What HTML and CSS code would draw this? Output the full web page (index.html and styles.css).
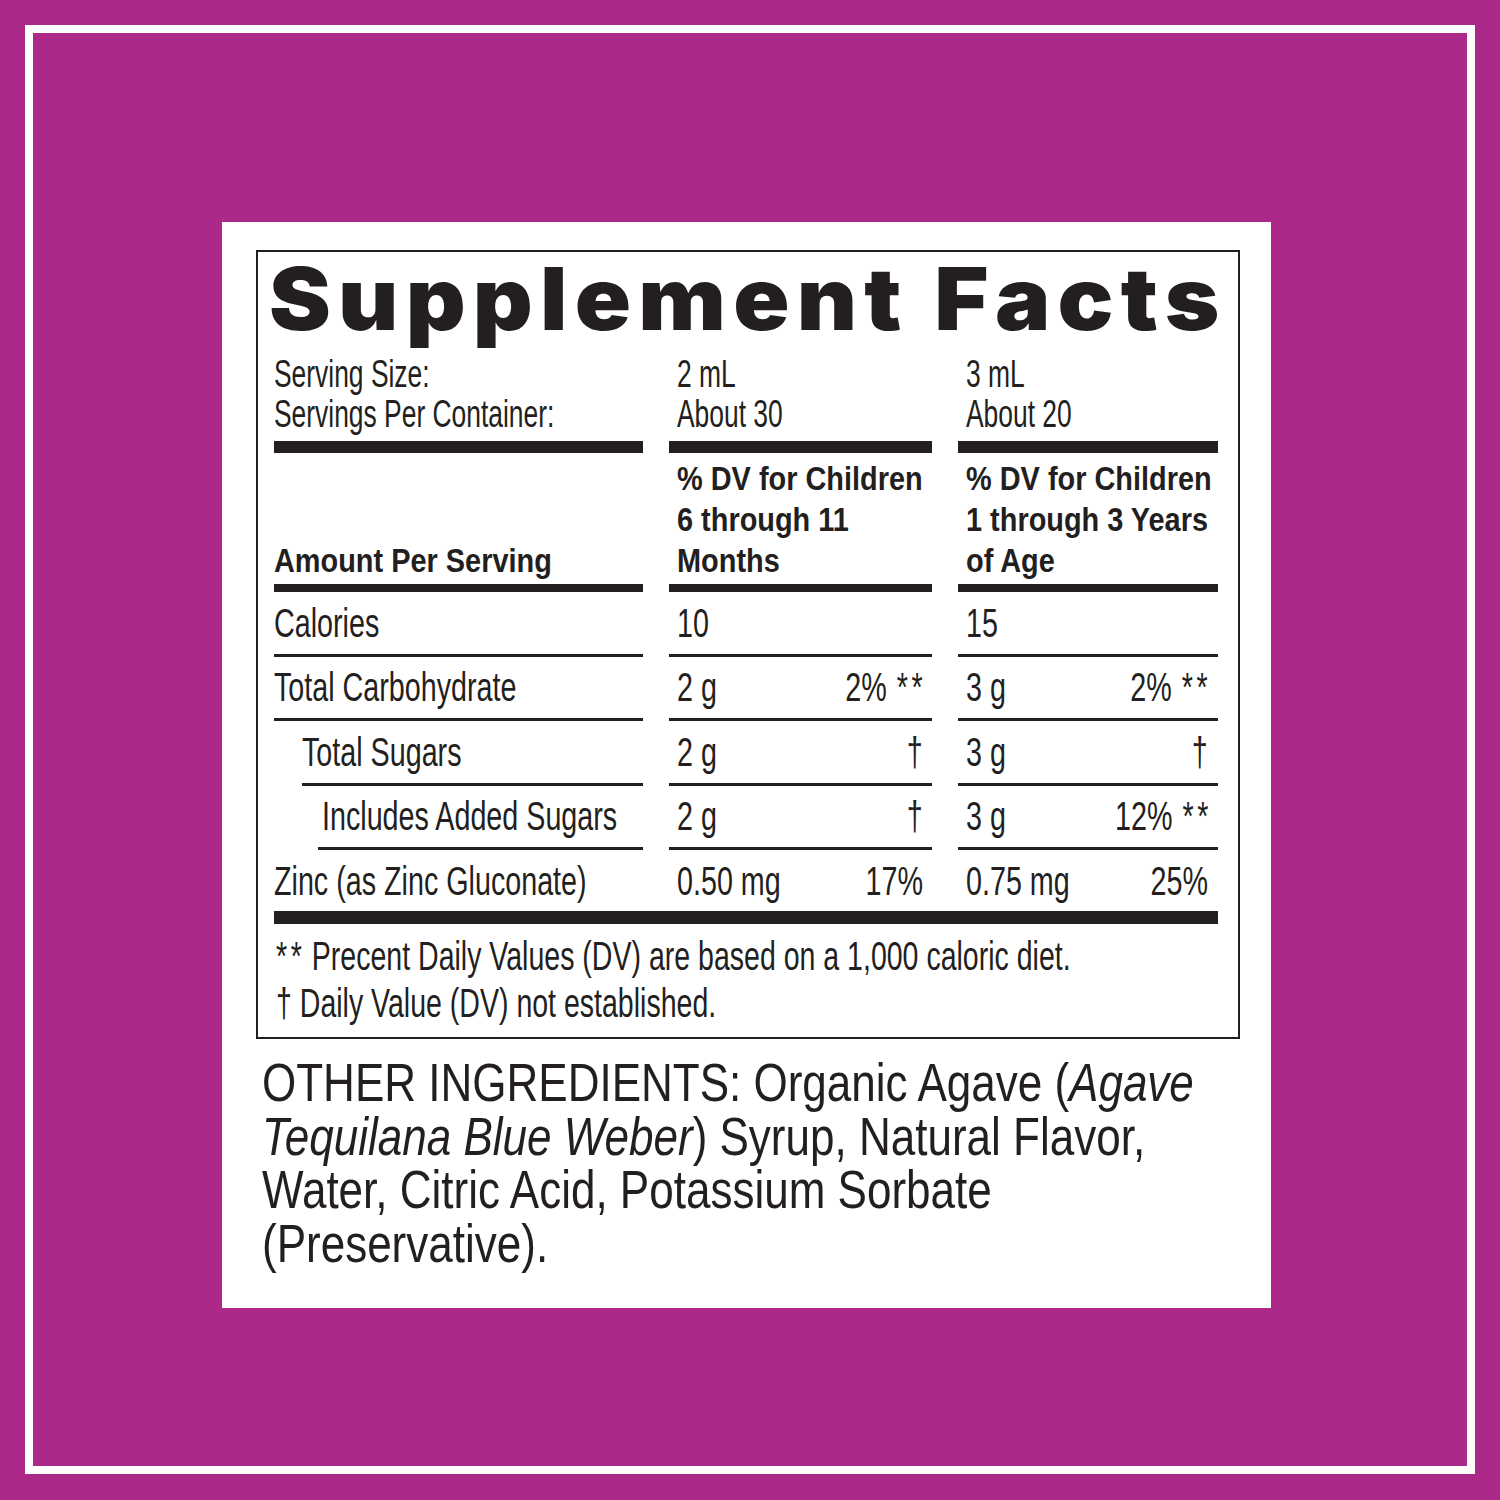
FILE: index.html
```html
<!DOCTYPE html>
<html lang="en">
<head>
<meta charset="utf-8">
<title>Supplement Facts</title>
<link rel="stylesheet" href="styles.css">
</head>
<body>
<div class="frame">
  <div class="card">
    <div class="panel">
      <h1 class="title"><span class="title-text">Supplement Facts</span></h1>
      <div class="facts">
        <div class="cell serv"><span class="sx">Serving Size:<br>Servings Per Container:</span></div>
        <div class="cell serv c2"><span class="sx">2 mL<br>About 30</span></div>
        <div class="cell serv c3"><span class="sx">3 mL<br>About 20</span></div>

        <div class="cell head hl"><span class="bx">Amount Per Serving</span></div>
        <div class="cell head c2"><span class="bx">% DV for Children<br>6 through 11<br>Months</span></div>
        <div class="cell head c3"><span class="bx">% DV for Children<br>1 through 3 Years<br>of Age</span></div>

        <div class="cell data"><span class="sx">Calories</span></div>
        <div class="cell data c2"><span class="sx">10</span></div>
        <div class="cell data c3"><span class="sx">15</span></div>

        <div class="cell data"><span class="sx">Total Carbohydrate</span></div>
        <div class="cell data c2"><span class="sx">2 g</span><span class="sx r">2% <span class="ast">**</span></span></div>
        <div class="cell data c3"><span class="sx">3 g</span><span class="sx r">2% <span class="ast">**</span></span></div>

        <div class="cell data ind1"><span class="sx">Total Sugars</span></div>
        <div class="cell data c2"><span class="sx">2 g</span><span class="sx r">†</span></div>
        <div class="cell data c3"><span class="sx">3 g</span><span class="sx r">†</span></div>

        <div class="cell data ind2"><span class="sx">Includes Added Sugars</span></div>
        <div class="cell data c2"><span class="sx">2 g</span><span class="sx r">†</span></div>
        <div class="cell data c3"><span class="sx">3 g</span><span class="sx r">12% <span class="ast">**</span></span></div>

        <div class="cell data last"><span class="sx">Zinc (as Zinc Gluconate)</span></div>
        <div class="cell data last c2"><span class="sx">0.50 mg</span><span class="sx r">17%</span></div>
        <div class="cell data last c3"><span class="sx">0.75 mg</span><span class="sx r">25%</span></div>

        <div class="bar"></div>
      </div>
      <div class="notes">
        <div class="note"><span class="sx"><span class="ast">**</span> Precent Daily Values (DV) are based on a 1,000 caloric diet.</span></div>
        <div class="note"><span class="sx">† Daily Value (DV) not established.</span></div>
      </div>
    </div>
    <p class="ingredients"><span class="ix">OTHER INGREDIENTS: Organic Agave (<em>Agave</em><br><em>Tequilana Blue Weber</em>) Syrup, Natural Flavor,<br>Water, Citric Acid, Potassium Sorbate<br>(Preservative).</span></p>
  </div>
</div>
</body>
</html>
```

FILE: styles.css
```css
html, body {
  margin: 0;
  padding: 0;
}

body {
  background: #ad2989;
  padding: 25px;
  width: 1500px;
  height: 1500px;
  box-sizing: border-box;
  font-family: "Liberation Sans", Arial, sans-serif;
  color: #231f20;
}

.frame {
  border: 8px solid #ffffff;
  width: 1450px;
  height: 1449px;
  box-sizing: border-box;
  padding: 189px 0 0 189px;
}

.card {
  background: #ffffff;
  width: 1049px;
  height: 1086px;
  box-sizing: border-box;
  padding: 28px 0 0 34px;
}

.panel {
  width: 984px;
  box-sizing: border-box;
  border: 2px solid #231f20;
  padding: 4px 20px 10px 16px;
}

.title {
  margin: 0 0 12px -5px;
  font-family: Inter, "DejaVu Sans", sans-serif;
  font-weight: 900;
  font-size: 86px;
  line-height: 86px;
  white-space: nowrap;
}

.title-text {
  display: inline-block;
  letter-spacing: 6.7px;
  transform: scaleX(1.08);
  transform-origin: left center;
}

.facts {
  display: grid;
  grid-template-columns: 369px 263px 260px;
  column-gap: 26px;
}

.cell {
  box-sizing: border-box;
  white-space: nowrap;
}

.sx {
  display: inline-block;
  transform: scaleX(0.7);
  transform-origin: left center;
}

.sx.r {
  transform-origin: right center;
}

.ast {
  letter-spacing: 5px;
  margin-left: 3px;
  margin-right: -5px;
}

.bx {
  display: inline-block;
  transform: scaleX(0.85);
  transform-origin: left bottom;
}

.serv {
  font-size: 38px;
  line-height: 40px;
  padding-bottom: 7px;
  border-bottom: 12px solid #231f20;
}

.serv .sx {
  transform: scaleX(0.695);
}

.head {
  font-weight: 700;
  font-size: 34px;
  line-height: 41px;
  padding: 5px 0 3px;
  border-bottom: 8px solid #231f20;
}

.head.hl {
  display: flex;
  align-items: flex-end;
}

.c2 {
  padding-left: 8px;
  padding-right: 9px;
}

.c3 {
  padding-left: 8px;
  padding-right: 10px;
}

.data {
  height: 64.5px;
  font-size: 41px;
  line-height: 40px;
  display: flex;
  align-items: center;
  justify-content: space-between;
  border-bottom: 3px solid #231f20;
}

.data.last {
  height: 61px;
  border-bottom: 0;
}

.ind1 {
  margin-left: 28px;
}

.ind2 {
  margin-left: 44px;
  padding-left: 4px;
}

.bar {
  grid-column: 1 / -1;
  height: 13px;
  background: #231f20;
}

.notes {
  padding-top: 9px;
}

.note {
  font-size: 40px;
  line-height: 47px;
  padding-left: 2px;
  white-space: nowrap;
}

.note .sx {
  transform: scaleX(0.713);
}

.note .ast {
  margin-left: 0;
  margin-right: -2px;
}

.ingredients {
  margin: 17px 0 0 6px;
  font-size: 54px;
  line-height: 53.5px;
  white-space: nowrap;
}

.ix {
  display: inline-block;
  transform: scaleX(0.815);
  transform-origin: left top;
}

.ingredients em {
  font-style: italic;
}
```
